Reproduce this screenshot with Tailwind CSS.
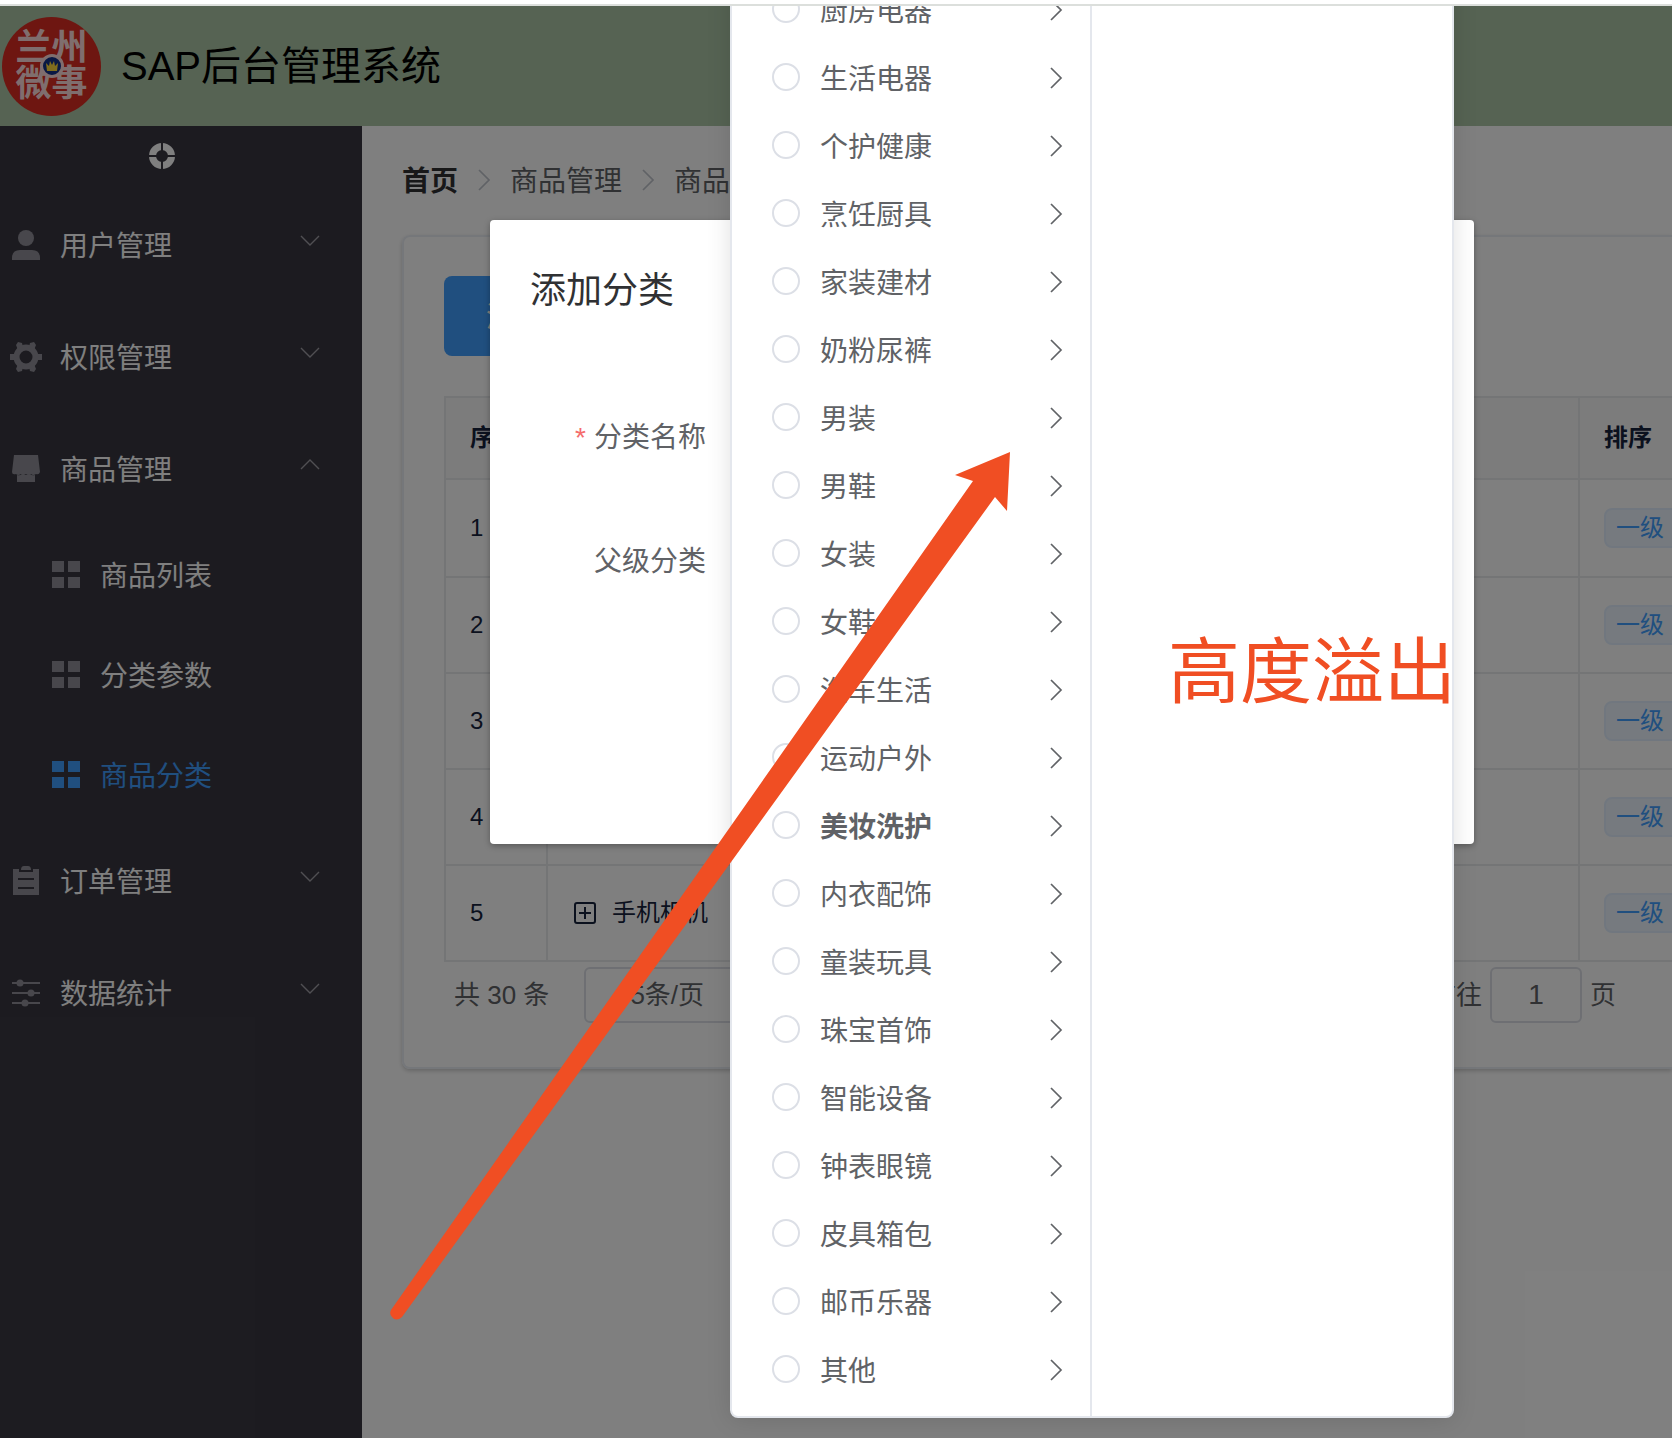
<!DOCTYPE html>
<html lang="zh-CN">

<head>
    <meta charset="UTF-8" />
    <meta name="viewport" content="width=device-width, initial-scale=1.0" />
    <title>SAP后台管理系统</title>
    <script src="https://cdn.jsdelivr.net/npm/@tailwindcss/browser@4"></script>
</head>

<body class="bg-white font-['Liberation_Sans','Noto_Sans_CJK_SC',sans-serif] text-[28px] text-[#606266]">
    <!-- Shared icons -->
    <svg class="hidden">
        <symbol id="right" viewBox="0 0 28 28"><path d="M9 4l10 10L9 24" fill="none" stroke="currentColor" stroke-width="1.700" /></symbol>
        <symbol id="down" viewBox="0 0 24 24"><path d="M3 8l9 9 9-9" fill="none" stroke="currentColor" stroke-width="1.400" /></symbol>
        <symbol id="up" viewBox="0 0 24 24"><path d="M3 17l9-9 9 9" fill="none" stroke="currentColor" stroke-width="1.400" /></symbol>
        <symbol id="user" viewBox="0 0 36 36"><circle cx="18" cy="11" r="8" /><path d="M4 33v-2q0-8 8-8h12q8 0 8 8v2z" /></symbol>
        <symbol id="gear" viewBox="0 0 36 36">
            <circle cx="18" cy="18" r="9.500" fill="none" stroke="currentColor" stroke-width="6" />
            <path d="M2 15h5v6H2zM29 15h5v6h-5zM8 6l2-3 4 1 1 4-5 3zM28 6l-2-3-4 1-1 4 5 3zM8 30l2 3 4-1 1-4-5-3zM28 30l-2 3-4-1-1-4 5-3z" />
        </symbol>
        <symbol id="shop" viewBox="0 0 36 36"><path d="M6 4h24l2 17q-1 3-4 2-3 2-5 0-3 2-5 0-3 2-5 0-3 2-5 0-4 1-4-2z" /><path d="M9 24q3 1 5-1 4 2 8 0 2 2 5 1v7H9z" /></symbol>
        <symbol id="order" viewBox="0 0 36 36"><path fill-rule="evenodd" d="M5 6h6v3h14V6h6v26H5zM10 15v2h16v-2zM10 24v2h16v-2z" /><path d="M13 7q0-4 3-4h4q3 0 3 4z" /></symbol>
        <symbol id="stats" viewBox="0 0 36 36"><path d="M4 7h28v2H4zM4 17h28v2H4zM4 27h28v2H4z" /><circle cx="12" cy="8" r="3.500" /><circle cx="23" cy="18" r="3.500" /><circle cx="17" cy="28" r="3.500" /></symbol>
        <symbol id="menu" viewBox="0 0 36 36"><path d="M4 4h12v11H4zM20 4h12v11H20zM4 20h12v11H4zM20 20h12v11H20z" /></symbol>
    </svg>

    <div class="h-[6px] border-b-2 border-[#dcdfdc]"></div>

    <div class="relative overflow-hidden flex flex-col min-h-[calc(100vh-6px)]">
        <header class="h-[120px] bg-[#acc6a6] flex items-center gap-5 pl-[2px]">
            <div class="relative size-[99px] rounded-full bg-[#dc2c22] text-[#ffdcdc] flex items-center justify-center">
                <div class="w-[74px] text-[36px] leading-[36px] font-bold text-center">兰州微事</div>
                <svg class="absolute size-6" viewBox="0 0 24 24">
                    <circle cx="12" cy="12" r="10.500" fill="#123088" stroke="#ffdcdc" stroke-width="3" />
                    <path d="M6 9l3 3 1-5 2 4 2-4 1 5 3-3-1 8H7z" fill="#ffd83a" />
                </svg>
            </div>
            <h1 class="text-[40px] text-black">SAP后台管理系统</h1>
        </header>

        <div class="flex flex-1">
            <aside class="w-[362px] shrink-0 bg-[#393741] text-white">
                <button class="flex w-[324px] h-[63px] pb-1 items-center justify-center" aria-label="折叠菜单">
                    <svg class="size-[26px]" viewBox="0 0 26 26">
                        <circle cx="13" cy="13" r="9.500" fill="none" stroke="currentColor" stroke-width="7" />
                        <path d="M13 0v26M0 13h26" stroke="#393741" stroke-width="2" />
                    </svg>
                </button>
                <nav id="nav"></nav>
            </aside>

            <main class="flex-1 min-w-0 pl-10">
                <nav class="flex items-center h-[40px] mt-[34px] mb-[35px]">
                    <a href="#" class="mt-1 font-bold text-[#303133]">首页</a>
                    <svg class="size-7 mx-3 text-[#c0c4cc]"><use href="#right" /></svg>
                    <span class="mt-1">商品管理</span>
                    <svg class="size-7 mx-3 text-[#c0c4cc]"><use href="#right" /></svg>
                    <span class="mt-1">商品分类</span>
                </nav>

                <section class="border-2 border-r-0 border-[#ebeef5] rounded-l-lg shadow-[0_2px_4px_rgba(0,0,0,0.2)] pl-10 pt-[39px] pb-[44px]">
                    <button class="h-20 px-[42px] pt-1 rounded-lg bg-[#409eff] text-white">添加分类</button>

                    <table class="w-full mt-10 table-fixed border-2 border-r-0 border-[#e8eaec] text-2xl text-[#17233d]">
                        <thead>
                            <tr class="h-[82px] bg-[#f8f8f9] border-b-2 border-[#e8eaec] text-left">
                                <th class="w-[102px] pl-6 border-r-2 border-[#e8eaec]">序号</th>
                                <th class="pl-6 border-r-2 border-[#e8eaec]">分类名称</th>
                                <th class="w-[93px] pl-6 whitespace-nowrap">排序</th>
                            </tr>
                        </thead>
                        <tbody id="rows"></tbody>
                    </table>

                    <div class="flex items-center justify-between mt-[5px] pl-[10px] pr-14 text-[26px]">
                        <div class="flex items-center gap-[35px]">
                            <span>共 30 条</span>
                            <select class="appearance-none w-[200px] h-14 pl-[44px] border-2 border-[#dcdfe6] rounded-md" aria-label="每页条数">
                                <option>5条/页</option>
                            </select>
                        </div>
                        <label class="flex items-center gap-[8px]">前往
                            <input type="text" value="1" class="w-[92px] h-14 border-2 border-[#dcdfe6] rounded-md text-center text-[28px]" />
                            页
                        </label>
                    </div>
                </section>
            </main>
        </div>

        <!-- Dialog mask -->
        <div class="absolute inset-0 bg-black/50"></div>

        <!-- Dialog -->
        <form class="absolute left-[490px] top-[214px] w-[984px] h-[624px] bg-white rounded-sm shadow-[0_2px_6px_rgba(0,0,0,0.3)] px-10 pt-[47px]">
            <h2 class="text-4xl leading-[48px] text-[#303133]">添加分类</h2>
            <div class="flex items-center mt-[83px] h-20">
                <label for="name" class="w-[200px] pr-6 text-right"><span class="text-[#f56c6c] mr-2">*</span>分类名称</label>
                <input id="name" type="text" class="flex-1 h-20 border-2 border-[#dcdfe6] rounded-lg px-7" />
            </div>
            <div class="flex items-center mt-[44px] h-20">
                <label for="parent" class="w-[200px] pr-6 text-right">父级分类</label>
                <input id="parent" type="text" class="flex-1 h-20 border-2 border-[#dcdfe6] rounded-lg px-7" />
            </div>
        </form>

        <!-- Cascader dropdown -->
        <div class="absolute left-[730px] -top-[44px] w-[724px] flex bg-white border-2 border-[#e4e7ed] rounded-lg shadow-[0_2px_24px_rgba(0,0,0,0.12)]">
            <ul id="options" class="w-[360px] py-3 border-r-2 border-[#e4e7ed]"></ul>
            <div class="flex-1"></div>
        </div>

        <!-- Annotation -->
        <div class="absolute left-[1168px] top-[606px] text-[72px] leading-[108px] text-[#f04e23] font-['Noto_Sans_CJK_SC',sans-serif] whitespace-nowrap">高度溢出</div>
        <svg class="absolute left-[380px] top-[434px] w-[640px] h-[890px]" viewBox="380 440 640 890">
            <path d="M391 1310L973 481 955 475 1010 452 1007 511 995 497 402 1317Q396 1322 392 1317 389 1314 391 1310z" fill="#f04e23" />
        </svg>
    </div>

    <script>
        const menus = [
            { name: '用户管理', icon: 'user' },
            { name: '权限管理', icon: 'gear' },
            { name: '商品管理', icon: 'shop', children: ['商品列表', '分类参数', '商品分类'] },
            { name: '订单管理', icon: 'order' },
            { name: '数据统计', icon: 'stats' },
        ];
        const categories = ['厨房电器', '生活电器', '个护健康', '烹饪厨具', '家装建材', '奶粉尿裤', '男装', '男鞋', '女装', '女鞋',
            '汽车生活', '运动户外', '美妆洗护', '内衣配饰', '童装玩具', '珠宝首饰', '智能设备', '钟表眼镜', '皮具箱包', '邮币乐器', '其他'];
        const goods = ['大家电', '热门推荐', '海外购', '苏宁房产', '手机相机'];

        // Side menu
        document.getElementById('nav').innerHTML = menus.map(m => `
            <button class="flex items-center w-full h-[112px] pl-2 pr-10">
                <svg class="size-9 text-[#908f98] fill-current"><use href="#${m.icon}" /></svg>
                <span class="ml-4 mt-1">${m.name}</span>
                <svg class="size-6 ml-auto mb-[10px] text-[#a09fa6]"><use href="#${m.children ? 'up' : 'down'}" /></svg>
            </button>
            ${(m.children || []).map(c => `
            <a href="#" class="flex items-center h-[100px] pl-12 ${c === '商品分类' ? 'text-[#409eff]' : ''}">
                <svg class="size-9 fill-current ${c === '商品分类' ? '' : 'text-[#908f98]'}"><use href="#menu" /></svg>
                <span class="ml-4 mt-1">${c}</span>
            </a>`).join('')}
        `).join('');

        // Table rows
        document.getElementById('rows').innerHTML = goods.map((g, i) => `
            <tr class="${i === 0 ? 'h-[98px]' : 'h-24'} border-b-2 border-[#e8eaec]">
                <td class="pl-6 border-r-2 border-[#e8eaec]">${i + 1}</td>
                <td class="pl-[26px] border-r-2 border-[#e8eaec]">
                    <div class="flex items-center gap-4">
                        <svg class="size-[22px]" viewBox="0 0 22 22" fill="none" stroke="currentColor" stroke-width="2">
                            <rect x="1" y="1" width="20" height="20" rx="2" /><path d="M5 11h12M11 5v12" />
                        </svg>${g}
                    </div>
                </td>
                <td class="pl-6"><span class="block w-20 h-10 leading-[36px] pl-[10px] border-2 border-[#e2efff] rounded-lg bg-[#ecf5ff] text-[#409eff] whitespace-nowrap">一级</span></td>
            </tr>`).join('');

        // Cascader options
        document.getElementById('options').innerHTML = categories.map(c => `
            <li>
                <label class="flex items-center h-[68px] pl-10 pr-5 ${c === '美妆洗护' ? 'font-bold' : ''}">
                    <input type="radio" name="category" class="appearance-none size-7 mb-[3px] rounded-full border-2 border-[#dcdfe6] bg-white" />
                    <span class="ml-5 mt-[3px]">${c}</span>
                    <svg class="size-7 ml-auto"><use href="#right" /></svg>
                </label>
            </li>`).join('');
    </script>
</body>

</html>
